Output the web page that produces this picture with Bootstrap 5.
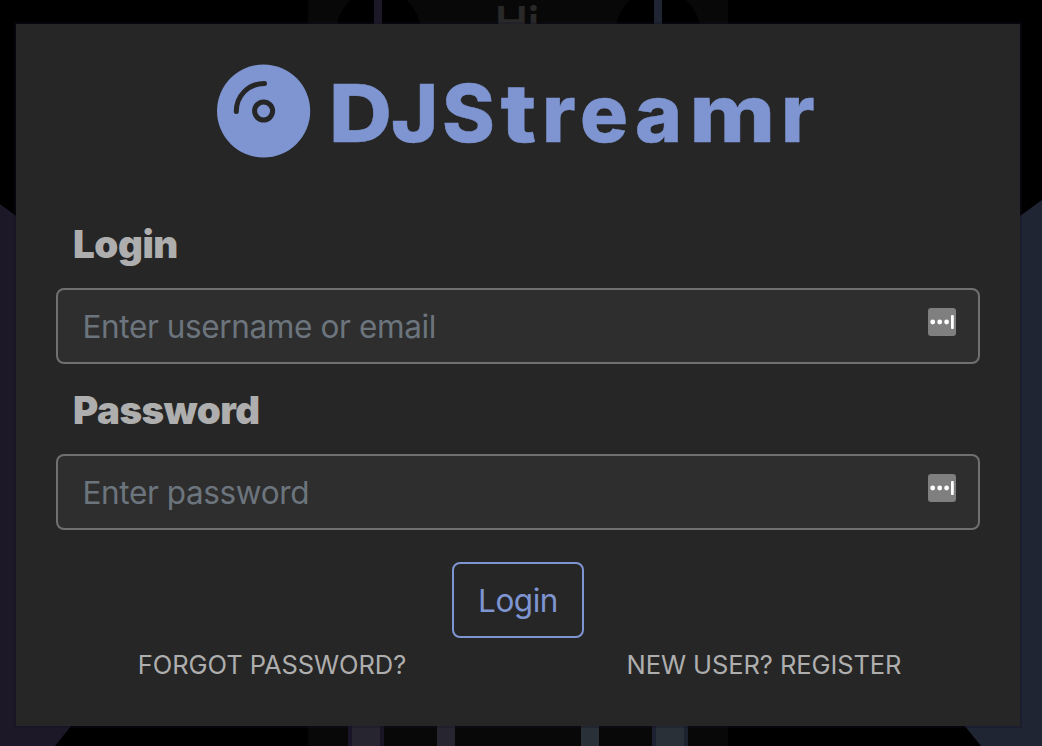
<!DOCTYPE html>
<html lang="en">
<head>
<meta charset="utf-8">
<meta name="viewport" content="width=device-width, initial-scale=1">
<title>DJStreamr</title>
<link href="https://cdn.jsdelivr.net/npm/bootstrap@5.3.0/dist/css/bootstrap.min.css" rel="stylesheet">
<style>
body{background:#000;font-family:Inter,"Liberation Sans",sans-serif;height:746px;overflow:hidden}
.backdrop-art{position:absolute;inset:0;z-index:-1}
.login-panel{margin:24px 22px 0 16px;height:702px;padding:40px;background:#262626;box-shadow:0 0 0 2px rgba(20,16,36,.3)}
.brand-logo{display:block;margin:0 auto;width:600px;height:94px;overflow:visible;position:relative;left:-1px}
.field-label{font-size:38.5px;font-weight:900;letter-spacing:-.45px;line-height:48px;color:#aeaeae;padding-left:17px;margin:62px 0 20px;display:block}
.field-label.second{margin-top:22px}
.form-control.dark-input,.form-control.dark-input:focus{height:76px;font-size:31.5px;letter-spacing:-.38px;background:#2e2e2e;border:2px solid #707070;border-radius:8px;padding:0 24.5px;color:#aeaeae}
.dark-input::placeholder{color:#6c757d}
.autofill{position:absolute;right:24px;top:20px;width:28px;height:28px}
.btn-login{width:132px;height:76px;border:2px solid #7e95d1;border-radius:8px;color:#7e95d1;font-size:31.5px;letter-spacing:-.5px;padding:2px 0 0;margin-top:32px}
.foot-row{margin:8px -30px 0}
.foot-link{font-size:25.5px;letter-spacing:-.08px;line-height:38px;color:#aeaeae;text-decoration:none;white-space:nowrap}
</style>
</head>
<body>
<svg class="backdrop-art" width="1042" height="746" aria-hidden="true">
<path fill="#080808" d="M308 0h420v746H308z"/>
<circle cx="378.500" cy="32" r="42.400"/><circle cx="658" cy="32" r="42.400"/>
<path fill="#1c1828" d="M374 0h8v40h-8zM0 204l16 12 60 45v459L55 746H0z"/>
<path fill="#1f2533" d="M654 0h8v40h-8zM1042 200l-22 16-60 45v459l21 26h61z"/>
<path fill="#1a1526" d="M348 700h36v46h-36z"/><path fill="#272630" d="M352 700h28v46h-28zM437 700h18v46h-18z"/>
<path fill="#1c2230" d="M652 700h36v46h-36z"/><path fill="#293038" d="M656 700h28v46h-28zM581 700h18v46h-18z"/>
<text x="495" y="38" font-size="44" font-weight="600" fill="#292929">Hi</text>
</svg>
<main class="login-panel">
<svg class="brand-logo" viewBox="217 64 600 94" role="img" aria-label="DJStreamr">
<circle cx="263.600" cy="111" r="46.600" fill="#7e95d1"/>
<circle cx="263.600" cy="111" r="9" fill="none" stroke="#262626" stroke-width="5"/>
<path d="M236.300 111.500C236.300 96.500 247.500 83.500 264.500 83.500" fill="none" stroke="#262626" stroke-width="5" stroke-linecap="round"/>
<g font-size="80" font-weight="800" fill="#7e95d1" stroke="#7e95d1" stroke-width=".5">
<text transform="translate(329 142) scale(1.09 1)">D</text>
<text x="391 442" y="142">JS</text>
<text transform="translate(500.500 142) scale(1.17 1)">t</text>
<text x="542 580 635" y="142">rea</text>
<text transform="translate(689.500 142) scale(1.155 1)">m</text>
<text x="781" y="142">r</text>
</g>
</svg>
<form>
<label class="field-label" for="user">Login</label>
<div class="position-relative">
<input class="form-control dark-input" id="user" type="text" placeholder="Enter username or email">
<svg class="autofill" viewBox="0 0 28 28"><rect width="28" height="28" rx="3" fill="#7f7f7f"/><g fill="#fff"><circle cx="4.700" cy="14" r="2.400"/><circle cx="11.700" cy="14" r="2.400"/><circle cx="18.600" cy="14" r="2.400"/><rect x="23" y="7" width="2.800" height="14" rx="1"/></g></svg>
</div>
<label class="field-label second" for="pass">Password</label>
<div class="position-relative">
<input class="form-control dark-input" id="pass" type="password" placeholder="Enter password">
<svg class="autofill" viewBox="0 0 28 28"><rect width="28" height="28" rx="3" fill="#7f7f7f"/><g fill="#fff"><circle cx="4.700" cy="14" r="2.400"/><circle cx="11.700" cy="14" r="2.400"/><circle cx="18.600" cy="14" r="2.400"/><rect x="23" y="7" width="2.800" height="14" rx="1"/></g></svg>
</div>
<div class="text-center"><button class="btn btn-login" type="button">Login</button></div>
<div class="row g-0 text-center foot-row">
<div class="col-6"><a class="foot-link" href="#">FORGOT PASSWORD?</a></div>
<div class="col-6"><a class="foot-link" href="#">NEW USER? REGISTER</a></div>
</div>
</form>
</main>
<script src="https://cdn.jsdelivr.net/npm/bootstrap@5.3.0/dist/js/bootstrap.bundle.min.js"></script>
</body>
</html>
